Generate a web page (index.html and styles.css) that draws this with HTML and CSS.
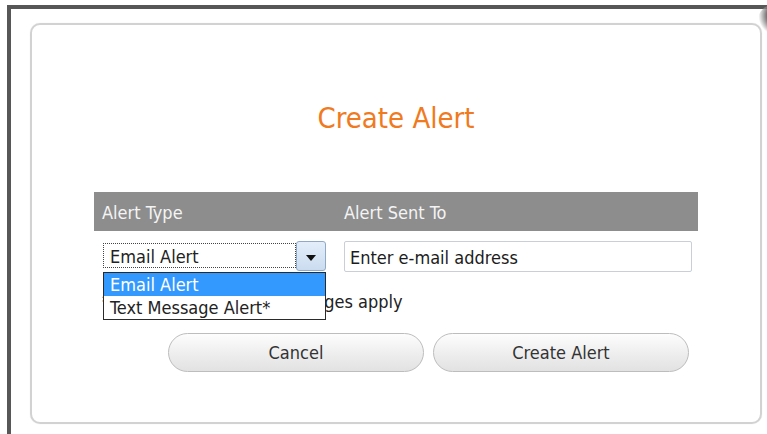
FILE: index.html
```html
<!DOCTYPE html>
<html lang="en">
<head>
<meta charset="utf-8">
<title>Create Alert</title>
<link rel="stylesheet" href="styles.css">
</head>
<body>
<div class="frame">
  <span class="close-knob"></span>
  <div class="card">
    <h1 class="title">Create Alert</h1>

    <div class="bar">
      <span class="bar-label col-type">Alert Type</span>
      <span class="bar-label col-to">Alert Sent To</span>
    </div>

    <div class="row">
      <div class="select">
        <div class="select-value">Email Alert</div>
        <div class="select-button">
          <svg width="10" height="6" viewBox="0 0 10 6"><path d="M0 0h10L5 6z" fill="#111"/></svg>
        </div>
        <ul class="select-list">
          <li class="option is-active">Email Alert</li>
          <li class="option">Text Message Alert*</li>
        </ul>
      </div>
      <div class="email">Enter e-mail address</div>
    </div>

    <p class="hint">*Normal text message charges apply</p>

    <div class="actions">
      <button class="btn" type="button">Cancel</button>
      <button class="btn" type="button">Create Alert</button>
    </div>
  </div>
</div>
</body>
</html>
```

FILE: styles.css
```css
html, body {
  margin: 0;
  height: 100%;
  overflow: hidden;
  background: #fff;
}

body {
  font-family: "DejaVu Sans Condensed", "DejaVu Sans", sans-serif;
  font-stretch: condensed;
  color: #222;
}

.frame {
  position: relative;
  margin: 5px 0 0 7px;
  height: calc(100% - 5px);
  border-top: 4px solid #575757;
  border-left: 4px solid #575757;
  box-sizing: border-box;
}

/* corner of the close control peeking in at the top right */
.close-knob {
  position: absolute;
  left: 747px;
  top: -4px;
  width: 30px;
  height: 30px;
  border-radius: 50%;
  background: radial-gradient(circle at 70% 35%, #444 0, #666 40%, rgba(160,160,160,0.6) 60%, rgba(255,255,255,0) 72%);
}

.card {
  margin: 14px 0 0 19px;
  width: 604px;
  height: 397px;
  padding: 0 62px;
  border: 2px solid #d2d2d2;
  border-radius: 10px;
  box-shadow: 0 0 1px rgba(0,0,0,0.15);
}

.title {
  margin: 76px 0 0;
  font-size: 29px;
  line-height: 34px;
  font-weight: normal;
  text-align: center;
  color: #f07a1e;
}

.bar {
  display: flex;
  margin-top: 57px;
  height: 39px;
  background: #8d8d8d;
}

.bar-label {
  padding-top: 3px;
  font-size: 18px;
  line-height: 36px;
  color: #f4f4f4;
}

.col-type {
  width: 242px;
  padding-left: 8px;
}

.row {
  display: flex;
  align-items: flex-start;
  margin-top: 10px;
  padding-left: 9px;
}

.select {
  position: relative;
  display: flex;
  width: 223px;
  height: 30px;
  font-size: 18px;
}

.select-value {
  flex: 1;
  margin: 2px 0 3px;
  padding-left: 6px;
  border: 1px dotted #444;
  line-height: 26px;
  height: 23px;
  overflow: hidden;
  color: #222;
}

.select-button {
  display: flex;
  align-items: center;
  justify-content: center;
  width: 28px;
  border: 1px solid #8fa9c7;
  border-radius: 3px;
  background: linear-gradient(#e4eefa, #cbdcf0);
}

.select-button svg {
  margin-top: 4px;
}

.select-list {
  position: absolute;
  top: 31px;
  left: 0;
  width: 221px;
  margin: 0;
  padding: 0;
  list-style: none;
  border: 1px solid #2a2a2a;
  background: #fff;
  z-index: 2;
}

.option {
  height: 23px;
  padding-left: 6px;
  line-height: 23px;
  color: #222;
}

.option.is-active {
  background: #3399ff;
  color: #fff;
}

.email {
  box-sizing: border-box;
  width: 348px;
  height: 31px;
  margin-left: 18px;
  padding-left: 5px;
  border: 1px solid #c9ced8;
  border-radius: 2px;
  font-size: 18px;
  line-height: 31px;
  color: #1c1c1c;
}

.hint {
  margin: 19px 0 0 8px;
  font-size: 18px;
  line-height: 22px;
  color: #222;
}

.actions {
  display: flex;
  gap: 9px;
  margin: 20px 0 0 74px;
}

.btn {
  width: 256px;
  height: 39px;
  border: 1px solid #bdbdbd;
  border-radius: 20px;
  background: linear-gradient(#fdfdfd, #ececec 60%, #e2e2e2);
  font-family: inherit;
  font-stretch: condensed;
  font-size: 18px;
  color: #333;
  cursor: pointer;
}
```
